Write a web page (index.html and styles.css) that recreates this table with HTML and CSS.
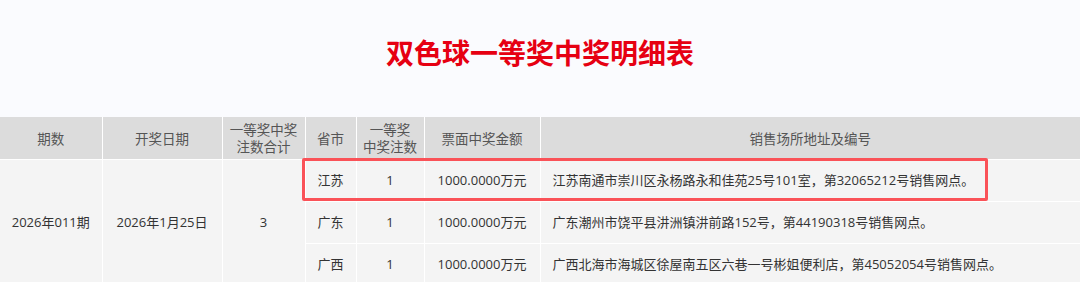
FILE: index.html
```html
<!DOCTYPE html>
<html lang="zh-CN">
<head>
<meta charset="utf-8">
<link rel="stylesheet" href="styles.css">
</head>
<body>
<div class="page">
  <h1 class="title">双色球一等奖中奖明细表</h1>
  <div class="table-wrap">
    <table class="prize">
      <colgroup>
        <col class="c1"><col class="c2"><col class="c3"><col class="c4"><col class="c5"><col class="c6"><col class="c7">
      </colgroup>
      <thead>
        <tr>
          <th>期数</th>
          <th>开奖日期</th>
          <th>一等奖中奖<br>注数合计</th>
          <th>省市</th>
          <th>一等奖<br>中奖注数</th>
          <th>票面中奖金额</th>
          <th>销售场所地址及编号</th>
        </tr>
      </thead>
      <tbody>
        <tr>
          <td rowspan="3">2026年011期</td>
          <td rowspan="3">2026年1月25日</td>
          <td rowspan="3">3</td>
          <td>江苏</td>
          <td>1</td>
          <td>1000.0000万元</td>
          <td class="addr">江苏南通市崇川区永杨路永和佳苑25号101室，第32065212号销售网点。</td>
        </tr>
        <tr>
          <td>广东</td>
          <td>1</td>
          <td>1000.0000万元</td>
          <td class="addr">广东潮州市饶平县汫洲镇汫前路152号，第44190318号销售网点。</td>
        </tr>
        <tr>
          <td>广西</td>
          <td>1</td>
          <td>1000.0000万元</td>
          <td class="addr">广西北海市海城区徐屋南五区六巷一号彬姐便利店，第45052054号销售网点。</td>
        </tr>
      </tbody>
    </table>
    <div class="highlight"></div>
  </div>
</div>
</body>
</html>
```

FILE: styles.css
```css
html, body {
  margin: 0;
  padding: 0;
  background: #fafbfe;
}
.page {
  width: 1080px;
  font-family: "Open Sans", "Noto Sans CJK SC", sans-serif;
  color: #333;
}
.title {
  margin: 0;
  height: 117px;
  display: flex;
  align-items: center;
  justify-content: center;
  font-family: "Noto Sans CJK SC", sans-serif;
  font-size: 28px;
  font-weight: 700;
  color: #e60012;
  padding-bottom: 14px;
  box-sizing: border-box;
}
.table-wrap {
  position: relative;
}
.prize {
  width: 1080px;
  border-collapse: collapse;
  table-layout: fixed;
  font-size: 13px;
}
.c1 { width: 102px; }
.c2 { width: 120px; }
.c3 { width: 83px; }
.c4 { width: 51px; }
.c5 { width: 68px; }
.c6 { width: 116px; }
.c7 { width: 540px; }
.prize th, .prize td {
  border: 1px solid #fff;
  text-align: center;
  padding: 0;
  line-height: 15px;
}
.prize th {
  background: #dcdcdc;
  color: #555;
  font-weight: 400;
  height: 42px;
  font-family: "Noto Sans CJK SC", sans-serif;
  font-size: 13.5px;
  line-height: 17px;
  white-space: nowrap;
}
.prize td {
  background: #f4f4f4;
  height: 41px;
}
.prize th:first-child, .prize td:first-child { border-left: none; }
.prize th:last-child, .prize td:last-child { border-right: none; }
.prize thead th { border-top: none; }
.prize td.addr {
  text-align: left;
  padding-left: 12px;
}
.highlight {
  position: absolute;
  left: 302px;
  top: 41px;
  width: 686px;
  height: 43px;
  border: 3px solid #fa5258;
  border-radius: 2px;
  box-sizing: border-box;
}
```
